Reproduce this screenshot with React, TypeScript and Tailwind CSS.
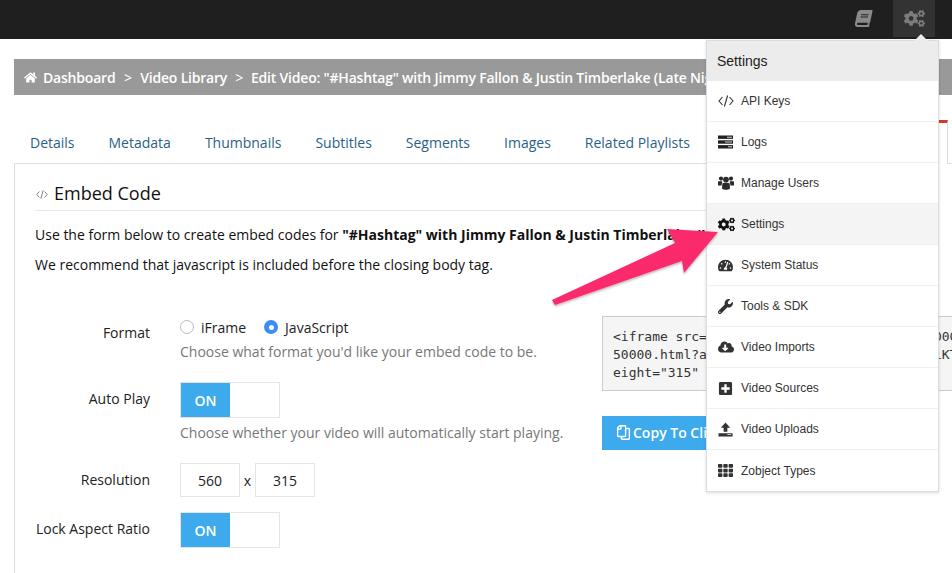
import { FaBook, FaCogs, FaHome, FaPlusSquare, FaRegCopy, FaTachometerAlt, FaTh, FaWrench, FaCloudDownloadAlt } from "react-icons/fa";
import type { ReactNode } from "react";

function CodeIcon({ className }: { className?: string }) {
  return (
    <svg viewBox="0 0 16 14" className={className} fill="none" stroke="currentColor" strokeWidth="1.1">
      <path d="M4.5 3 L1 7 L4.5 11" />
      <path d="M11.5 3 L15 7 L11.5 11" />
      <path d="M9.6 1.5 L6.4 12.5" />
    </svg>
  );
}

function LogsIcon() {
  return (
    <svg viewBox="0 0 15 14" className="h-[14px] w-[15px]">
      <rect x="0" y="0.5" width="15" height="3.4" fill="#222" />
      <rect x="0" y="5.3" width="15" height="3.4" fill="#222" />
      <rect x="0" y="10.1" width="15" height="3.4" fill="#222" />
      <rect x="9" y="1.8" width="5" height="0.8" fill="#fff" />
      <rect x="7" y="6.6" width="7" height="0.8" fill="#fff" />
      <rect x="10" y="11.4" width="4" height="0.8" fill="#fff" />
    </svg>
  );
}

function UsersIcon() {
  return (
    <svg viewBox="0 0 16 14" className="h-[14px] w-[16px]" fill="#2a2a2a">
      <circle cx="3" cy="2.6" r="2.1" />
      <circle cx="13" cy="2.6" r="2.1" />
      <circle cx="8" cy="3.6" r="2.9" />
      <path d="M0 5.6 C1 5 3 5 4.4 5.6 C4 7 3.6 8 3.6 9.6 H0 Z" />
      <path d="M16 5.6 C15 5 13 5 11.6 5.6 C12 7 12.4 8 12.4 9.6 H16 Z" />
      <path d="M4.4 7.4 C5.5 6.6 10.5 6.6 11.6 7.4 C12 9 12 11 11.8 13 C10 14 6 14 4.2 13 C4 11 4 9 4.4 7.4 Z" />
    </svg>
  );
}

function UploadIcon() {
  return (
    <svg viewBox="0 0 16 16" className="h-[15px] w-[15px]" fill="currentColor">
      <path d="M8 0.5 L13 6 H10 V10.5 H6 V6 H3 Z" />
      <path d="M0.5 12 H15.5 V15.5 H0.5 Z" />
      <path d="M10 13 H14 V13.8 H10 Z" fill="#fff" />
    </svg>
  );
}

const items: { label: string; icon: ReactNode; active?: boolean }[] = [
  { label: "API Keys", icon: <CodeIcon className="h-[14px] w-[16px]" /> },
  { label: "Logs", icon: <LogsIcon /> },
  { label: "Manage Users", icon: <UsersIcon /> },
  { label: "Settings", icon: <FaCogs size={17} className="text-[#111]" />, active: true },
  { label: "System Status", icon: <FaTachometerAlt size={15} /> },
  { label: "Tools & SDK", icon: <FaWrench size={15} /> },
  { label: "Video Imports", icon: <FaCloudDownloadAlt size={16} /> },
  { label: "Video Sources", icon: <FaPlusSquare size={15} /> },
  { label: "Video Uploads", icon: <UploadIcon /> },
  { label: "Zobject Types", icon: <FaTh size={15} /> },
];

const tabs = ["Details", "Metadata", "Thumbnails", "Subtitles", "Segments", "Images", "Related Playlists"];

function Toggle() {
  return (
    <div className="flex h-[36px] w-[100px] border border-[#e5e5e5] bg-white">
      <div className="flex w-[49px] items-center justify-center bg-[#3daaee] text-[14px] font-semibold text-white">ON</div>
    </div>
  );
}

function Row({ label, children, className }: { label: string; children: ReactNode; className?: string }) {
  return (
    <div className={`flex ${className ?? ""}`}>
      <div className="w-[136px] shrink-0 pt-[7px] text-right text-[14px] leading-[20px] text-[#222]">{label}</div>
      <div className="ml-[30px] min-w-0 flex-1">{children}</div>
    </div>
  );
}

export default function App() {
  return (
    <div className="relative h-[573px] w-[952px] overflow-hidden bg-white font-['Open_Sans',sans-serif]">
      <header className="flex h-[39px] items-start justify-end bg-[#1f1f1f] pr-[17px]">
        <div className="mr-[21px] flex h-[37px] items-center">
          <FaBook size={17} className="-skew-x-12 text-[#8a8a8a]" />
        </div>
        <div className="flex h-[37px] w-[42px] items-center justify-center bg-[#333333]">
          <FaCogs size={21} className="text-[#7c7c7c]" />
        </div>
      </header>

      <div className="ml-[14px] mt-[20px] flex h-[36px] w-[960px] items-center whitespace-nowrap bg-[#999999] pl-[10px] text-[14px] font-semibold tracking-[-0.2px] text-white">
        <FaHome size={13} className="mr-[6px]" />
        <span>Dashboard</span>
        <span className="mx-[8.5px] font-normal">&gt;</span>
        <span>Video Library</span>
        <span className="mx-[8px] font-normal">&gt;</span>
        <span>Edit Video: "#Hashtag" with Jimmy Fallon &amp; Justin Timberlake (Late Night with Jimmy Fallon)</span>
      </div>

      <nav className="ml-[14px] mt-[25px] flex h-[44px] w-[938px] items-end">
        <div className="flex h-[44px] flex-1 items-center gap-[34px] border-b border-[#dddddd] pl-[16px] pt-[2px] text-[14px] text-[#2b5f88]">
          {tabs.map((t) => (
            <span key={t}>{t}</span>
          ))}
        </div>
        <div className="h-[44px] w-[240px] border-x border-t-[3px] border-x-[#dddddd] border-t-[#d9392a] bg-white" />
        <div className="h-[44px] w-[4px] border-b border-[#dddddd]" />
      </nav>

      <section className="ml-[14px] h-[409px] w-[960px] border-l border-[#dddddd] pl-[20px] pt-[14px] text-[#111]">
        <div className="flex h-[33px] w-[900px] items-start border-b border-[#e8e8e8]">
          <CodeIcon className="ml-[1px] mr-[6px] mt-[11px] h-[11px] w-[12px] text-[#666]" />
          <h2 className="text-[18px] leading-[31px] text-[#111]">Embed Code</h2>
        </div>
        <p className="mt-[14px] whitespace-nowrap text-[14px] leading-[20px]">
          Use the form below to create embed codes for{" "}
          <b>"#Hashtag" with Jimmy Fallon &amp; Justin Timberlake (Late Night)</b>
        </p>
        <p className="mt-[10px] text-[14px] leading-[20px]">We recommend that javascript is included before the closing body tag.</p>

        <div className="mt-[41px] flex">
          <div className="-ml-[21px] w-[588px] shrink-0">
            <Row label="Format">
              <div className="mt-[1px] flex h-[20px] items-center text-[14px] text-[#222]">
                <span className="h-[14px] w-[14px] rounded-full border border-[#bbbbbb] bg-white" />
                <span className="ml-[7px]">iFrame</span>
                <span className="ml-[18px] flex h-[14px] w-[14px] items-center justify-center rounded-full bg-[#3b8df0]">
                  <span className="h-[5px] w-[5px] rounded-full bg-white" />
                </span>
                <span className="ml-[7px]">JavaScript</span>
              </div>
              <p className="mt-[5px] text-[14px] leading-[20px] text-[#777]">Choose what format you'd like your embed code to be.</p>
            </Row>
            <Row label="Auto Play" className="mt-[20px]">
              <Toggle />
              <p className="mt-[5px] text-[14px] leading-[20px] text-[#777]">Choose whether your video will automatically start playing.</p>
            </Row>
            <Row label="Resolution" className="mt-[20px]">
              <div className="flex items-center text-[14px] text-[#222]">
                <div className="flex h-[34px] w-[60px] items-center justify-center border border-[#e5e5e5]">560</div>
                <span className="w-[15px] text-center">x</span>
                <div className="flex h-[34px] w-[60px] items-center justify-center border border-[#e5e5e5]">315</div>
              </div>
            </Row>
            <Row label="Lock Aspect Ratio" className="mt-[15px]">
              <Toggle />
            </Row>
          </div>
          <div className="w-[500px] shrink-0">
            <pre className="h-[75px] w-[480px] border border-[#cccccc] bg-[#f5f5f5] pl-[10px] pt-[11px] font-['DejaVu_Sans_Mono',monospace] text-[13px] leading-[18px] text-[#333]">
              {'<iframe src="https://api.example.com/v/10000\n50000.html?autoplay=1&token=abcdefghijklmiKT\neight="315"'}
            </pre>
            <button className="mt-[25px] flex h-[34px] w-[180px] items-center bg-[#3daaee] pb-[1px] pl-[14px] text-[14px] font-semibold text-white">
              <FaRegCopy size={15} className="mr-[2px] -scale-x-100" />
              Copy To Clipboard
            </button>
          </div>
        </div>
      </section>

      <svg className="pointer-events-none absolute inset-0 z-20 h-[573px] w-[952px]" viewBox="0 0 952 573">
        <defs>
          <filter id="s" x="-10%" y="-10%" width="120%" height="130%">
            <feDropShadow dx="0" dy="1.5" stdDeviation="1.2" floodColor="#000" floodOpacity="0.3" />
          </filter>
        </defs>
        <polygon points="552,300 675,243 667,229 718,232 684,273 682,261 555,305" fill="#fb2c6c" filter="url(#s)" />
      </svg>

      <div className="absolute left-[706px] top-[40px] z-10 w-[233px] border border-[#dddddd] bg-white font-['Liberation_Sans',sans-serif] shadow-[0_1px_3px_rgba(0,0,0,0.15)]">
        <div className="absolute -top-[7px] left-[207px] h-0 w-0 border-x-[7px] border-b-[7px] border-x-transparent border-b-[#ececec]" />
        <div className="flex h-[40px] items-center bg-[#ececec] pl-[10px] text-[14px] text-[#222]">Settings</div>
        {items.map((it, i) => (
          <div
            key={it.label}
            className={`flex h-[41px] items-center pl-[11px] text-[12px] text-[#333] ${i < items.length - 1 ? "border-b border-[#f0f0f0]" : ""} ${it.active ? "bg-[#f4f4f4]" : "bg-white"}`}
          >
            <span className="flex w-[23px] shrink-0 items-center text-[#333]">{it.icon}</span>
            {it.label}
          </div>
        ))}
      </div>
    </div>
  );
}
